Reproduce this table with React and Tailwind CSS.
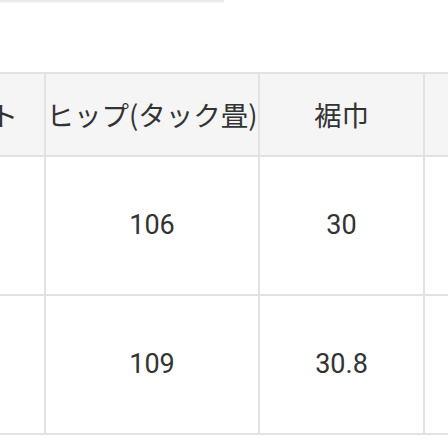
import React from 'react';

// Size chart, cropped: only the middle columns are in view
const HEADERS = ['ウエスト', 'ヒップ(タック畳)', '裾巾', ''];
const ROWS = [
  ['', '106', '30', ''],
  ['', '109', '30.8', ''],
];

const COL_WIDTHS = ['w-[172px]', 'w-[214px]', 'w-[165px]', 'w-[200px]'];

export default function App() {
  return (
    <div className="w-[448px] h-[448px] overflow-hidden bg-white relative">
      <div className="h-[3px] w-[224px] bg-gradient-to-b from-[#e6e6e6] to-[#f6f6f6]" />
      <table
        className="mt-[69px] ml-[-128px] border-collapse table-fixed text-[#333]"
        style={{ width: 751 }}
      >
        <colgroup>
          {COL_WIDTHS.map((w, i) => (
            <col key={i} className={w} />
          ))}
        </colgroup>
        <thead>
          <tr className="h-[83px] bg-[#f5f5f5]">
            {HEADERS.map((h, i) => (
              <th
                key={i}
                className={`border-2 border-[#e2e2e2] font-normal text-[27.5px] leading-none whitespace-nowrap p-0 ${
                  i === 0 ? 'text-right pr-[26px]' : 'text-center'
                }`}
                style={{ fontFamily: '"Noto Sans CJK JP", "Noto Sans", sans-serif' }}
              >
                {h}
              </th>
            ))}
          </tr>
        </thead>
        <tbody>
          {ROWS.map((row, r) => (
            <tr key={r} className="h-[139px]">
              {row.map((v, i) => (
                <td
                  key={i}
                  className="border-2 border-[#e2e2e2] text-[27px] text-center p-0"
                  style={{ fontFamily: 'Roboto, "Noto Sans", sans-serif' }}
                >
                  {v}
                </td>
              ))}
            </tr>
          ))}
        </tbody>
      </table>
      <div className="mt-[13px] h-[1px] w-full bg-[#c4c4c4]" />
    </div>
  );
}
